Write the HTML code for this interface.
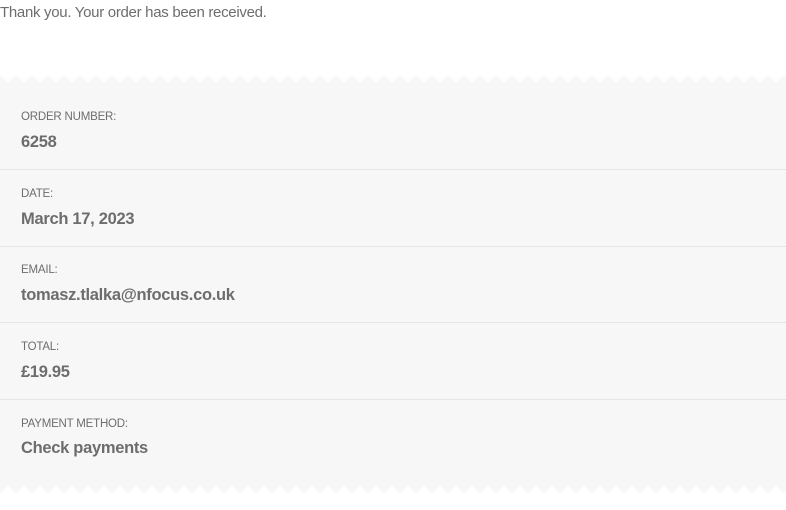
<!DOCTYPE html>
<html><head><style>
body{margin:0;width:786px;height:510px;background:#fff;font-family:"Liberation Sans",sans-serif;color:#6d6d6d;overflow:hidden;position:relative}
.top{position:absolute;left:0;top:4px;font-size:15px;letter-spacing:-0.3px}
.panel{position:absolute;left:0;top:76px;width:786px;height:417px;background:#f7f7f7}
.zz{position:absolute;left:0;width:786px;height:8px}
.row{position:absolute;left:0;width:786px;height:76px;border-bottom:1px solid #e6e6e6}
.l{position:absolute;left:21px;font-size:11.5px;letter-spacing:-0.2px}
.v{position:absolute;left:21px;font-size:16.5px;font-weight:bold;letter-spacing:-0.3px}
</style></head><body>
<div class="top">Thank you. Your order has been received.</div>
<div class="panel"></div>
<svg class="zz" style="top:75px" viewBox="0 0 786 8" preserveAspectRatio="none"><defs><pattern id="p" width="16" height="8" patternUnits="userSpaceOnUse"><polygon points="0,0 16,0 8,8" fill="#fff"/></pattern></defs><rect width="786" height="8" fill="url(#p)"/></svg>
<svg class="zz" style="top:486px" viewBox="0 0 786 8" preserveAspectRatio="none"><defs><pattern id="q" width="16" height="8" patternUnits="userSpaceOnUse"><polygon points="0,8 16,8 8,0" fill="#fff"/></pattern></defs><rect width="786" height="8" fill="url(#q)"/></svg>
<div class="row" style="top:93px"><div class="l" style="top:18px">ORDER NUMBER:</div><div class="v" style="top:40px">6258</div></div>
<div class="row" style="top:170px;height:76px"><div class="l" style="top:18px">DATE:</div><div class="v" style="top:40px">March 17, 2023</div></div>
<div class="row" style="top:247px;height:75px"><div class="l" style="top:17px">EMAIL:</div><div class="v" style="top:39px">tomasz.tlalka@nfocus.co.uk</div></div>
<div class="row" style="top:323px;height:76px"><div class="l" style="top:18px">TOTAL:</div><div class="v" style="top:40px">£19.95</div></div>
<div class="row" style="top:400px;border:none"><div class="l" style="top:18px">PAYMENT METHOD:</div><div class="v" style="top:39px">Check payments</div></div>
</body></html>
